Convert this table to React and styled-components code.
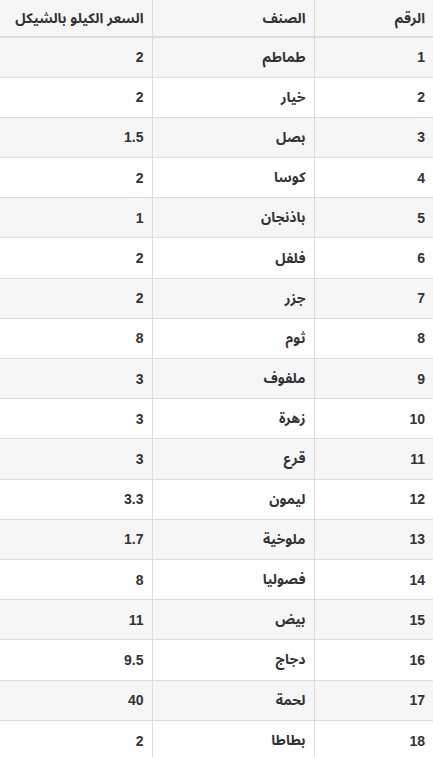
import React from "react";
import styled, { createGlobalStyle } from "styled-components";

const GlobalStyle = createGlobalStyle`
  html, body {
    margin: 0;
    padding: 0;
    background: #ffffff;
  }
`;

const Page = styled.div`
  width: 433px;
  direction: rtl;
  font-family: "Liberation Sans", "Noto Sans Arabic", "Noto Naskh Arabic", "DejaVu Sans", Arial, sans-serif;
  font-size: 14px;
  font-weight: bold;
  color: #333333;
`;

const Table = styled.table`
  width: 100%;
  border-collapse: collapse;
  border-spacing: 0;
  table-layout: fixed;
`;

const HeadCell = styled.th`
  box-sizing: border-box;
  width: ${(props) => props.w}px;
  height: 37px;
  padding: 0 8px;
  text-align: right;
  vertical-align: middle;
  background: #f6f6f6;
  border-bottom: 2px solid #dddddd;
  border-left: 1px solid #dddddd;
  white-space: nowrap;
  font-size: ${(props) => props.fs || 14}px;

  &:last-child {
    border-left: none;
  }
`;

const Row = styled.tr`
  height: 40.2px;
  background: ${(props) => (props.striped ? "#f6f6f6" : "#ffffff")};
`;

const Cell = styled.td`
  padding: 0 8px;
  text-align: right;
  vertical-align: middle;
  border-top: 1px solid #dddddd;
  border-left: 1px solid #dddddd;

  &:last-child {
    border-left: none;
  }
`;

const items = [
  ["طماطم", "2"],
  ["خيار", "2"],
  ["بصل", "1.5"],
  ["كوسا", "2"],
  ["باذنجان", "1"],
  ["فلفل", "2"],
  ["جزر", "2"],
  ["ثوم", "8"],
  ["ملفوف", "3"],
  ["زهرة", "3"],
  ["قرع", "3"],
  ["ليمون", "3.3"],
  ["ملوخية", "1.7"],
  ["فصوليا", "8"],
  ["بيض", "11"],
  ["دجاج", "9.5"],
  ["لحمة", "40"],
  ["بطاطا", "2"],
];

export default function App() {
  return (
    <>
      <GlobalStyle />
      <Page>
        <Table>
          <thead>
            <tr>
              <HeadCell w={119}>الرقم</HeadCell>
              <HeadCell w={162}>الصنف</HeadCell>
              <HeadCell w={152}>السعر الكيلو بالشيكل</HeadCell>
            </tr>
          </thead>
          <tbody>
            {items.map(([name, price], i) => (
              <Row key={i} striped={i % 2 === 0}>
                <Cell>{i + 1}</Cell>
                <Cell>{name}</Cell>
                <Cell>{price}</Cell>
              </Row>
            ))}
          </tbody>
        </Table>
      </Page>
    </>
  );
}
